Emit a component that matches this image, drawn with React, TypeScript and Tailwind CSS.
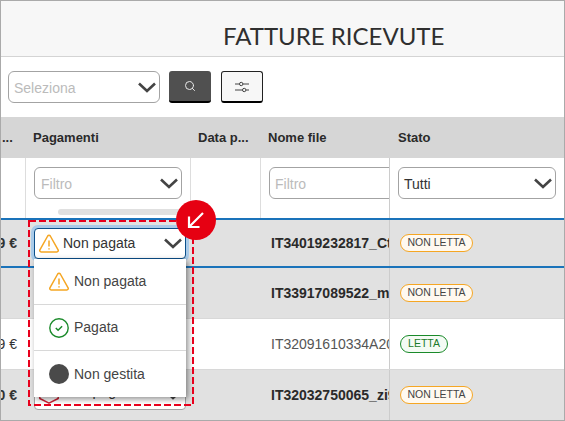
import { Search } from "lucide-react";

const Chevron = ({ className = "" }: { className?: string }) => (
  <svg viewBox="0 0 18 11" className={`w-[18px] h-[11px] ${className}`} fill="none" stroke="#444" strokeWidth="2.6">
    <path d="M1 1.5l8 7.5 8-7.5" />
  </svg>
);

const Warning = () => (
  <svg viewBox="0 0 20 20" className="w-5 h-5 shrink-0" fill="none" stroke="#f5a623" strokeWidth="1.5" strokeLinejoin="round">
    <path d="M10 1.2c.6 0 1 .3 1.3.8l7.8 13.9c.5.9-.1 2-1.200 2H2.100c-1.100 0-1.700-1.100-1.200-2L8.700 2c.3-.5.7-.8 1.300-.8z" />
    <path d="M10 6.500v6M10 14.300v1.300" strokeWidth="1.500" />
  </svg>
);

const Check = () => (
  <svg viewBox="0 0 20 20" className="w-5 h-5 shrink-0" fill="none" stroke="#1a8a2a" strokeWidth="1.400">
    <circle cx="10" cy="10" r="9.200" />
    <path d="M6.800 10l2.300 2.300 4-4" strokeWidth="1.500" />
  </svg>
);

const Hexagon = () => (
  <svg viewBox="0 0 20 20" className="w-5 h-5 shrink-0" fill="none" stroke="#cc2233" strokeWidth="1.500" strokeLinejoin="round">
    <path d="M10 .8l9.200 4.700v9L10 19.200.8 14.500v-9z" />
  </svg>
);

const Select = ({ label, placeholder, className = "" }: { label: string; placeholder?: boolean; className?: string }) => (
  <div className={`flex h-[32px] items-center justify-between rounded-md border border-[#a3a3a3] bg-white pl-[5px] pr-[3px] text-[14px] ${placeholder ? "text-[#bbbbbb]" : "text-[#333333]"} ${className}`}>
    <span className="pt-[2px]">{label}</span>
    <Chevron />
  </div>
);

const Badge = ({ read }: { read?: boolean }) =>
  read ? (
    <span className="flex h-[18px] w-[48px] items-center justify-center rounded-full border border-[#1a8a2a] bg-[#f4fbf4] text-[10.5px] font-normal text-[#1a7a2a]">LETTA</span>
  ) : (
    <span className="flex h-[18px] w-[73px] items-center justify-center rounded-full border border-[#f5a623] bg-[#fff9f0] text-[10.5px] font-normal text-[#444444]">NON LETTA</span>
  );

const cols = "grid grid-cols-[25px_165px_70px_129px_1fr]";

const DropdownOption = ({ icon, label, last }: { icon: React.ReactNode; label: string; last?: boolean }) => (
  <div className={`flex h-[46px] items-center gap-[5px] pl-[15px] text-[14px] font-normal text-[#444444] ${last ? "" : "border-b border-[#d8d8d8]"}`}>
    {icon}
    <span>{label}</span>
  </div>
);

const rows = [
  { amount: "1.250,89 €", file: "IT34019232817_Ct7aB.xml", bold: true },
  { amount: "", file: "IT33917089522_mKp2L.xml", bold: true },
  { amount: "2.180,49 €", file: "IT32091610334A2019.xml", bold: false },
  { amount: "3.460,20 €", file: "IT32032750065_zi9Qe.xml", bold: true },
];

export default function App() {
  return (
    <div className="relative box-border h-[421px] w-[565px] overflow-hidden border border-[#aaaaaa] bg-white font-['Liberation_Sans',Arial,sans-serif] text-[#333333]">
      <div className="flex h-[56px] items-end border-b border-[#d4d4d4] bg-[#f7f7f7] pb-[2px] pl-[222px] font-['Lato',sans-serif] text-[24px] text-[#2f2f2f]">
        FATTURE RICEVUTE
      </div>

      <div className="flex h-[60px] items-center pl-[7px]">
        <Select label="Seleziona" placeholder className="w-[152px]" />
        <button className="ml-[9px] flex h-[32px] w-[42px] items-center justify-center rounded-[3px] border-b-2 border-black bg-[#505050]">
          <Search className="h-[12px] w-[12px] text-[#e8e8e8]" />
        </button>
        <button className="ml-[10px] flex h-[32px] w-[42px] items-center justify-center rounded-[3px] border border-b-2 border-[#222222] border-b-black bg-[#f7f7f7]">
          <svg viewBox="0 0 14 12" className="h-[12px] w-[14px]" fill="none" stroke="#444" strokeWidth="1">
            <path d="M0 3h4.500M8 3h6M0 9h7.500M11 9h3" />
            <circle cx="6.200" cy="3" r="1.700" />
            <circle cx="9.200" cy="9" r="1.700" />
          </svg>
        </button>
      </div>

      <div className={`${cols} h-[41px] items-center bg-[#d6d6d6] text-[13px] font-bold text-[#2a2a2a]`}>
        <div className="pl-[1px]">...</div>
        <div className="pl-[7px]">Pagamenti</div>
        <div className="pl-[7px]">Data p...</div>
        <div className="pl-[7px]">Nome file</div>
        <div className="pl-[8px]">Stato</div>
      </div>

      <div className={`${cols} relative h-[62px] border-b-2 border-[#1a73ba]`}>
        <div className="border-r border-[#dddddd]" />
        <div className="border-r border-[#dddddd] pl-[8px] pt-[9px]">
          <Select label="Filtro" placeholder className="w-[148px] pl-[6px]" />
        </div>
        <div className="border-r border-[#dddddd]" />
        <div className="overflow-hidden border-r border-[#cccccc] pl-[8px] pt-[9px]">
          <Select label="Filtro" placeholder className="w-[150px] rounded-r-none pl-[3px]" />
        </div>
        <div className="pl-[8px] pt-[9px]">
          <Select label="Tutti" className="w-[158px] pl-[2px]" />
        </div>
        <div className="absolute left-[57px] top-[51px] h-[6px] w-[125px] rounded-full bg-[#e0e0e0]" />
      </div>

      {rows.map((row, i) => (
        <div
          key={row.file}
          className={`${cols} text-[13px] ${row.bold ? "bg-[#e1e1e1] font-bold" : "bg-white"} ${
            i === 0 ? "h-[48px] border-b-2 border-[#1a73ba]" : i === 3 ? "h-[50px]" : "h-[51px] border-b border-[#d8d8d8]"
          }`}
        >
          <div className="flex items-center justify-end overflow-hidden whitespace-nowrap pr-[9px] text-[14px]">{row.amount}</div>
          <div className="relative flex items-center pl-[8px]">
            {i === 0 && (
              <div className="relative z-10 mt-[1px] w-[152px] font-normal">
                <div className="flex h-[31px] items-center justify-between rounded-[4px] border border-[#0b4f8a] bg-white pl-[4px] pr-[3px] text-[14px] text-[#333333] shadow-[0_0_0_3px_#a9cbe9]">
                  <span className="flex items-center gap-[4px]">
                    <Warning />
                    Non pagata
                  </span>
                  <Chevron />
                </div>
                <div className="absolute left-0 top-[31px] w-[152px] bg-white shadow-[2px_2px_6px_rgba(0,0,0,0.45)]">
                  <DropdownOption icon={<Warning />} label="Non pagata" />
                  <DropdownOption icon={<Check />} label="Pagata" />
                  <DropdownOption icon={<span className="h-5 w-5 shrink-0 rounded-full bg-[#4a4a4a]" />} label="Non gestita" last />
                </div>
              </div>
            )}
            {i === 3 && (
              <div className="mb-[2px] flex h-[32px] w-[152px] items-center justify-between rounded-[4px] border border-[#a3a3a3] bg-white pl-[4px] pr-[3px] text-[14px] font-normal">
                <span className="flex items-center gap-[4px]">
                  <Hexagon />
                  <span className="pb-[5px]">Non pagata</span>
                </span>
                <Chevron />
              </div>
            )}
          </div>
          <div />
          <div className={`flex items-center overflow-hidden whitespace-nowrap border-r border-[#cccccc] pl-[10px] pt-[1px] ${row.bold ? "text-[#2a2a2a]" : "text-[#555555]"} text-[14px]`}>
            {row.file}
          </div>
          <div className="flex items-center pl-[10px]">
            <Badge read={!row.bold} />
          </div>
        </div>
      ))}

      <svg className="absolute left-[27px] top-[219px] z-20 h-[186px] w-[166px]" viewBox="0 0 166 186" fill="none" stroke="#e8001c" strokeWidth="2" strokeDasharray="7 3">
        <rect x="1" y="1" width="164" height="184" />
      </svg>
      <div className="absolute left-[175px] top-[199px] z-30 flex h-[40px] w-[40px] items-center justify-center rounded-full bg-[#e60012]">
        <svg viewBox="0 0 20 20" className="h-[20px] w-[20px]" fill="none" stroke="white" strokeWidth="2.200">
          <path d="M17 3L3.500 16.500M3 6.500v10.500h10.500" />
        </svg>
      </div>
    </div>
  );
}
